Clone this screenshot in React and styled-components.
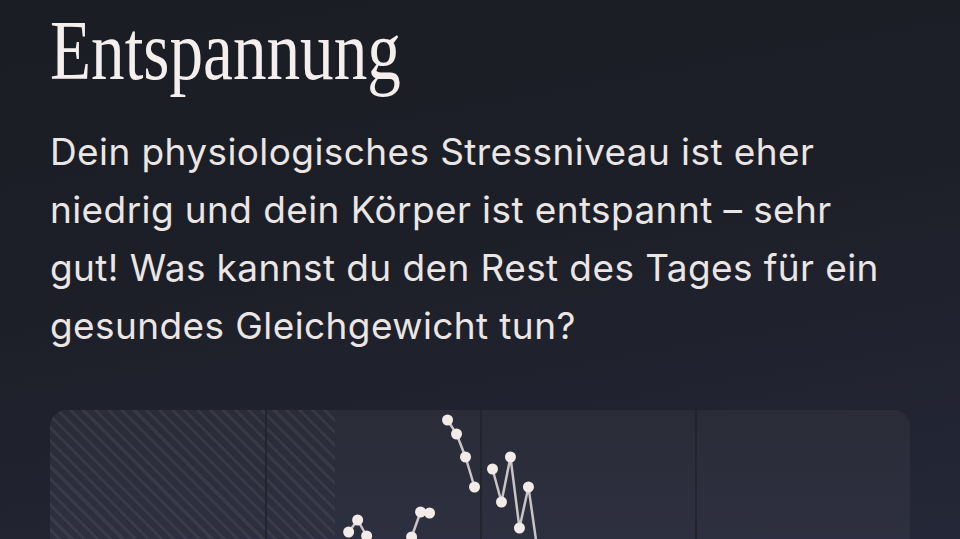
import React from 'react';
import styled, { createGlobalStyle } from 'styled-components';

const GlobalStyle = createGlobalStyle`
  html, body {
    margin: 0;
    padding: 0;
    height: 100%;
    overflow: hidden;
  }
  body {
    background: #1c1e26;
  }
`;

// page backdrop, dark with a faint blue lift toward the bottom
const Screen = styled.div`
  width: 960px;
  height: 539px;
  overflow: hidden;
  box-sizing: border-box;
  padding: 9px 50px 0 50px;
  background: linear-gradient(170deg, #1b1d24 0%, #1d1f28 45%, #242737 100%);
  color: #f1ebe9;
`;

const Title = styled.h1`
  margin: 0;
  font-family: "Liberation Serif", "Times New Roman", serif;
  font-weight: 400;
  font-size: 84px;
  line-height: 84px;
  color: #f4eeec;
  transform: scaleX(0.8);
  transform-origin: left center;
  white-space: nowrap;
`;

const Lead = styled.p`
  margin: 30px 0 0 0;
  font-family: Inter, "Noto Sans", sans-serif;
  font-size: 37px;
  line-height: 58px;
  letter-spacing: 0.4px;
  color: #ebe5e4;
  white-space: nowrap;
`;

const Card = styled.div`
  margin-top: 55px;
  height: 300px;
  border-radius: 16px;
  overflow: hidden;
  display: grid;
  grid-template-columns: repeat(4, 1fr);
  grid-template-rows: 1fr;
  background:
    repeating-linear-gradient(45deg, rgba(255, 255, 255, 0.06) 0 3px, transparent 3px 9px) 0 0 / 285px 100% no-repeat,
    linear-gradient(180deg, #2a2c37 0%, #2e3143 60%, #313449 100%);
`;

const Column = styled.div`
  grid-row: 1;
  grid-column: ${(p) => p.$col};
  border-left: ${(p) => (p.$first ? 'none' : '2px solid #22242e')};
`;

const Plot = styled.svg`
  grid-row: 1;
  grid-column: 1 / -1;
  width: 100%;
  height: 100%;
  overflow: visible;
`;

// stress readings, in card coordinates; each array is an unbroken run
const runs = [
  [[299, 122], [308, 110], [317, 126], [326, 140], [335, 150], [344, 145], [353, 138], [362, 127], [371, 102], [380, 103]],
  [[398, 10], [407, 24], [416, 47], [425, 77]],
  [[443, 59], [452, 92], [461, 47], [470, 118], [479, 77], [488, 140], [497, 170]],
];

function StressPlot() {
  return (
    <Plot viewBox="0 0 861 300" preserveAspectRatio="none">
      {runs.map((run, i) => (
        <g key={i}>
          <polyline
            points={run.map((p) => p.join(',')).join(' ')}
            fill="none"
            stroke="#c9c4c5"
            strokeWidth="2.5"
            strokeLinejoin="round"
          />
          {run.map(([x, y], j) => (
            <circle key={j} cx={x} cy={y} r="5.5" fill="#f2ebe8" />
          ))}
        </g>
      ))}
    </Plot>
  );
}

export default function App() {
  return (
    <>
      <GlobalStyle />
      <Screen>
        <Title>Entspannung</Title>
        <Lead>
          Dein physiologisches Stressniveau ist eher
          <br />
          niedrig und dein Körper ist entspannt – sehr
          <br />
          gut! Was kannst du den Rest des Tages für ein
          <br />
          gesundes Gleichgewicht tun?
        </Lead>
        <Card>
          <Column $col={1} $first />
          <Column $col={2} />
          <Column $col={3} />
          <Column $col={4} />
          <StressPlot />
        </Card>
      </Screen>
    </>
  );
}
